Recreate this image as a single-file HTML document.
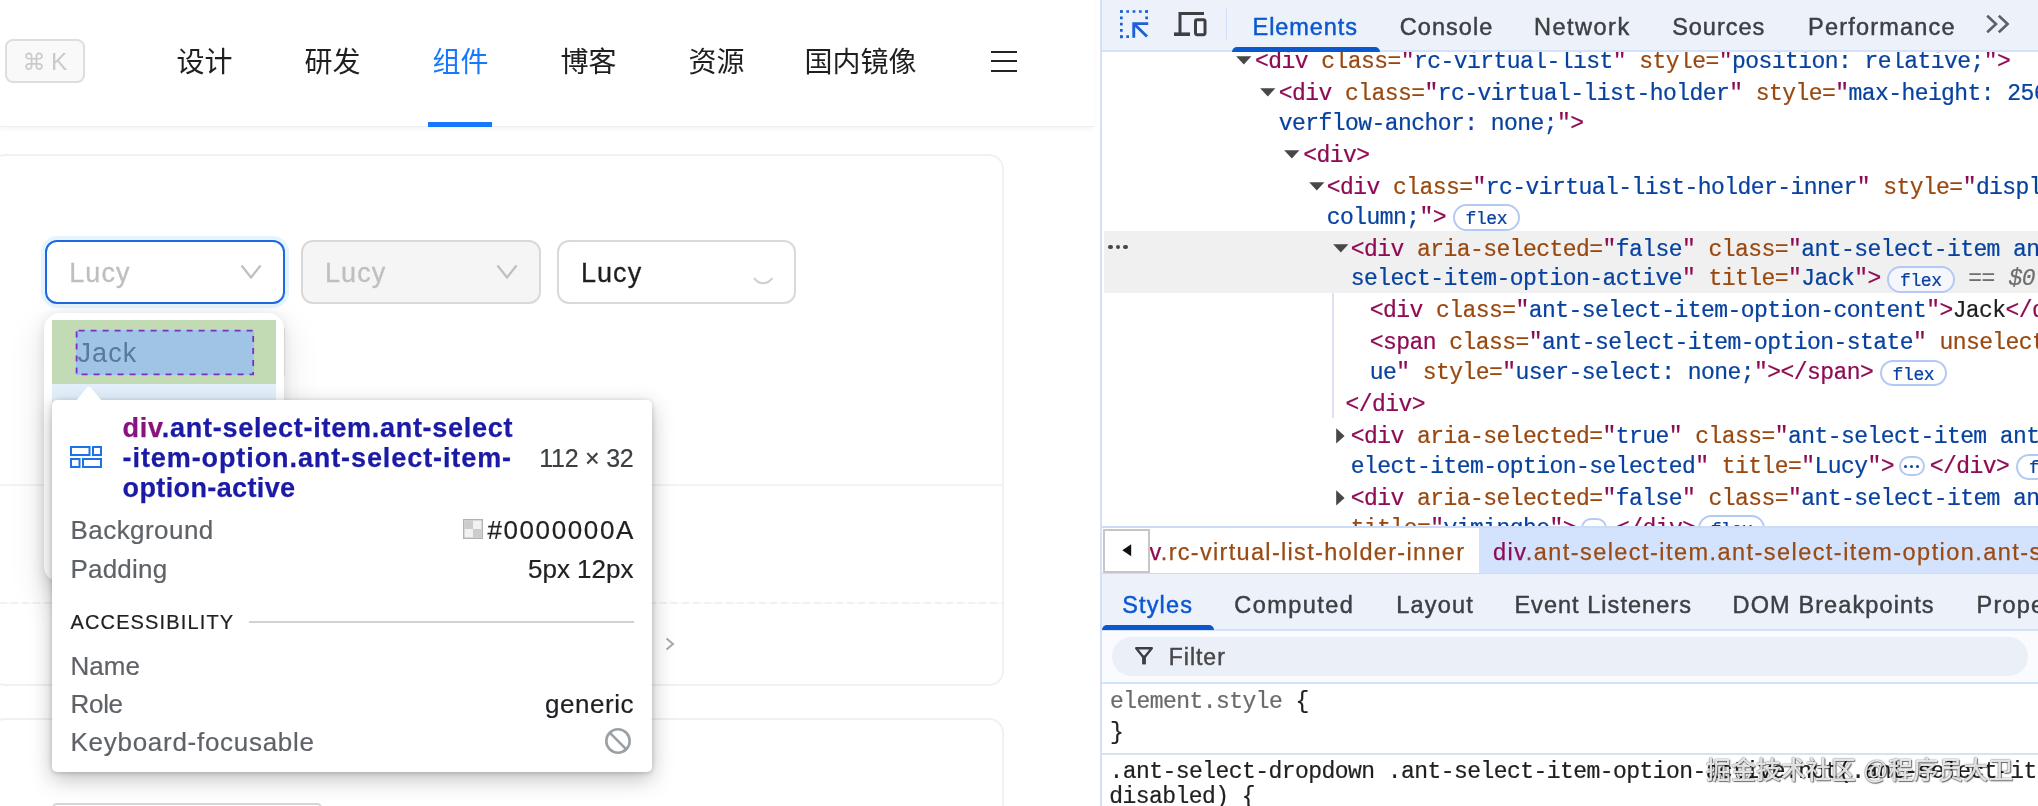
<!DOCTYPE html>
<html lang="zh-CN"><head><meta charset="utf-8"><title>Select – DevTools</title>
<style>
html,body{margin:0;padding:0;background:#fff;}
body{will-change:transform;width:2038px;height:806px;position:relative;overflow:hidden;font-family:'Liberation Sans', 'Noto Sans CJK SC', sans-serif;}
.t{position:absolute;white-space:pre;}
.m{-webkit-text-stroke:0.22px currentColor;}
.b{position:absolute;box-sizing:border-box;}
svg{position:absolute;overflow:visible;}
.clip{position:absolute;overflow:hidden;}
</style></head><body>
<div class="clip" style="left:0;top:0;width:1100px;height:806px;background:#fff;">
<div class="b" style="left:0px;top:0px;width:1094px;height:127px;background:#fff;border-bottom:1.5px solid #efefef;box-shadow:0 2px 6px rgba(0,0,0,.045);"></div>
<div class="b" style="left:5px;top:39px;width:79.7px;height:43.8px;background:#f9f9f9;border:2px solid #dedede;border-radius:8px;"></div>
<span class="t" style="left:22.4px;top:51px;font:400 23px/1 'Liberation Sans', 'Noto Sans CJK SC', sans-serif;color:#cacaca;font-family:'DejaVu Sans','Liberation Sans',sans-serif;">⌘</span>
<span class="t" style="left:51px;top:50px;font:400 24.5px/1 'Liberation Sans', 'Noto Sans CJK SC', sans-serif;color:#cacaca;">K</span>
<span class="t" style="left:176.4px;top:49px;font:400 28px/1 'Liberation Sans', 'Noto Sans CJK SC', sans-serif;color:#1f1f1f;">设计</span>
<span class="t" style="left:304.4px;top:49px;font:400 28px/1 'Liberation Sans', 'Noto Sans CJK SC', sans-serif;color:#1f1f1f;">研发</span>
<span class="t" style="left:432.4px;top:49px;font:400 28px/1 'Liberation Sans', 'Noto Sans CJK SC', sans-serif;color:#1677ff;">组件</span>
<span class="t" style="left:560.4px;top:49px;font:400 28px/1 'Liberation Sans', 'Noto Sans CJK SC', sans-serif;color:#1f1f1f;">博客</span>
<span class="t" style="left:688.4px;top:49px;font:400 28px/1 'Liberation Sans', 'Noto Sans CJK SC', sans-serif;color:#1f1f1f;">资源</span>
<span class="t" style="left:804.4px;top:49px;font:400 28px/1 'Liberation Sans', 'Noto Sans CJK SC', sans-serif;color:#1f1f1f;">国内镜像</span>
<div class="b" style="left:428px;top:122px;width:64px;height:4.5px;background:#1677ff;"></div>
<div class="b" style="left:991px;top:50.5px;width:26px;height:2.4px;background:#222;"></div>
<div class="b" style="left:991px;top:60px;width:26px;height:2.4px;background:#222;"></div>
<div class="b" style="left:991px;top:69.5px;width:26px;height:2.4px;background:#222;"></div>
<div class="b" style="left:-10px;top:153.8px;width:1014px;height:532.2px;border:2px solid #f1f1f1;border-radius:15px;background:#fff;"></div>
<div class="b" style="left:0px;top:484px;width:1003px;height:2px;background:#f3f3f3;"></div>
<div class="b" style="left:0px;top:602px;width:1003px;height:2px;background:repeating-linear-gradient(90deg,#f1f1f1 0 7px,#fbfbfb 7px 11px);"></div>
<svg style="left:664px;top:636px" width="12" height="16" viewBox="0 0 12 16"><path d="M2.5 2.5 L9 8 L2.5 13.5" fill="none" stroke="#a8a8a8" stroke-width="2"/></svg>
<div class="b" style="left:-10px;top:717.5px;width:1014px;height:200px;border:2px solid #f1f1f1;border-radius:15px;background:#fff;"></div>
<div class="b" style="left:52px;top:803.2px;width:270px;height:20px;border:2px solid #d6d6d6;border-bottom:0;border-radius:5px 5px 0 0;"></div>
<div class="b" style="left:45.4px;top:240px;width:239.4px;height:64px;background:#fff;border:2px solid #1c6ae0;border-radius:12px;box-shadow:0 0 0 4px rgba(5,145,255,.1);"></div>
<span class="t" style="left:69.2px;top:260px;font:400 27px/1 'Liberation Sans', 'Noto Sans CJK SC', sans-serif;color:#bfbfbf;letter-spacing:1.083px;-webkit-text-stroke:0.3px #bfbfbf;">Lucy</span>
<div class="b" style="left:301.2px;top:240px;width:239.4px;height:64px;background:#f5f5f5;border:2px solid #d9d9d9;border-radius:12px;"></div>
<span class="t" style="left:325.0px;top:260px;font:400 27px/1 'Liberation Sans', 'Noto Sans CJK SC', sans-serif;color:#bfbfbf;letter-spacing:1.083px;-webkit-text-stroke:0.3px #bfbfbf;">Lucy</span>
<div class="b" style="left:557.1px;top:240px;width:239.4px;height:64px;background:#fff;border:2px solid #d9d9d9;border-radius:12px;"></div>
<span class="t" style="left:580.9px;top:260px;font:400 27px/1 'Liberation Sans', 'Noto Sans CJK SC', sans-serif;color:#1f1f1f;letter-spacing:1.083px;-webkit-text-stroke:0.3px #1f1f1f;">Lucy</span>
<svg style="left:240px;top:264px" width="22" height="16" viewBox="0 0 22 16"><path d="M1.5 1.5 L11 13.5 L20.5 1.5" fill="none" stroke="#bfbfbf" stroke-width="2.2"/></svg>
<svg style="left:496px;top:264px" width="22" height="16" viewBox="0 0 22 16"><path d="M1.5 1.5 L11 13.5 L20.5 1.5" fill="none" stroke="#bfbfbf" stroke-width="2.2"/></svg>
<svg style="left:752px;top:276px" width="22" height="10" viewBox="0 0 22 10"><path d="M2.6 2.6 A 10.4 10.4 0 0 0 19.8 2.6" fill="none" stroke="#cfcfcf" stroke-width="2" stroke-linecap="round"/></svg>
<div class="b" style="left:44px;top:312.5px;width:240px;height:269px;background:#fff;border-radius:16px;box-shadow:0 12px 32px 8px rgba(0,0,0,.07),0 6px 16px rgba(0,0,0,.08),0 0 10px rgba(0,0,0,.05);"></div>
<div class="b" style="left:52px;top:320px;width:224px;height:64px;background:#c3dbb4;"></div>
<div class="b" style="left:76px;top:330px;width:178px;height:45px;background:#a0c4e6;"></div>
<span class="t" style="left:77.6px;top:340px;font:400 27px/1 'Liberation Sans', 'Noto Sans CJK SC', sans-serif;color:#587a9c;letter-spacing:1.023px;">Jack</span>
<svg style="left:74px;top:328px" width="184" height="50" viewBox="0 0 184 50"><rect x="2.6" y="2.6" width="176.6" height="43.8" fill="none" stroke="#7a2ec6" stroke-width="1.8" stroke-dasharray="6 6" stroke-dashoffset="-2"/></svg>
<div class="b" style="left:52px;top:384px;width:224px;height:64px;background:#e3f0fb;"></div>
<div class="b" style="left:283.5px;top:328px;width:1.5px;height:48px;background:#d4d4d4;"></div>
</div>
<svg style="left:76px;top:385px" width="26" height="16" viewBox="0 0 26 16"><path d="M0 16 L11.2 2.6 Q12.8 0.8 14.4 2.6 L26 16 Z" fill="#fff"/></svg>
<div class="b" style="left:52px;top:400px;width:600px;height:371.8px;background:#fff;border-radius:5px;box-shadow:0 7px 22px rgba(0,0,0,.25),0 1px 5px rgba(0,0,0,.2);"></div>
<svg style="left:76px;top:385px" width="26" height="18" viewBox="0 0 26 18"><path d="M0 18 L0 16 L11.2 2.6 Q12.8 0.8 14.4 2.6 L26 16 L26 18 Z" fill="#fff"/></svg>
<svg style="left:70px;top:446px" width="32" height="22" viewBox="0 0 32 22" fill="none" stroke="#1a73e8" stroke-width="2"><rect x="1" y="1" width="18.5" height="8"/><rect x="23" y="1" width="8" height="8"/><rect x="1" y="13" width="8.5" height="8"/><rect x="13" y="13" width="18" height="8"/></svg>
<span class="t" style="left:122.6px;top:415px;font:700 27px/1 'Liberation Sans', 'Noto Sans CJK SC', sans-serif;color:#1a1aa6;letter-spacing:0.737px;-webkit-text-stroke:0.25px #1a1aa6;"><span style="color:#881280;-webkit-text-stroke-color:#881280">div</span>.ant-select-item.ant-select</span>
<span class="t" style="left:122.6px;top:445px;font:700 27px/1 'Liberation Sans', 'Noto Sans CJK SC', sans-serif;color:#1a1aa6;letter-spacing:0.91px;-webkit-text-stroke:0.25px #1a1aa6;">-item-option.ant-select-item-</span>
<span class="t" style="left:122.6px;top:475px;font:700 27px/1 'Liberation Sans', 'Noto Sans CJK SC', sans-serif;color:#1a1aa6;letter-spacing:0.373px;-webkit-text-stroke:0.25px #1a1aa6;">option-active</span>
<span class="t" style="right:1404.5px;top:446px;font:400 25px/1 'Liberation Sans', 'Noto Sans CJK SC', sans-serif;color:#3c4043;letter-spacing:-0.223px;-webkit-text-stroke:0.2px #3c4043;">112 × 32</span>
<span class="t" style="left:70.5px;top:517px;font:400 26px/1 'Liberation Sans', 'Noto Sans CJK SC', sans-serif;color:#5f6368;letter-spacing:0.45px;-webkit-text-stroke:0.2px currentColor;">Background</span>
<span class="t" style="right:1403.0px;top:517px;font:400 26px/1 'Liberation Sans', 'Noto Sans CJK SC', sans-serif;color:#202124;letter-spacing:1.621px;-webkit-text-stroke:0.2px currentColor;">#0000000A</span>
<svg style="left:463px;top:519px" width="20" height="20" viewBox="0 0 20 20"><rect x="0.7" y="0.7" width="18.6" height="18.6" fill="#f1f1f1" stroke="#b2b2b2" stroke-width="1.4"/><rect x="1.4" y="1.4" width="8.6" height="8.6" fill="#cccccc"/><rect x="10" y="10" width="8.6" height="8.6" fill="#cccccc"/></svg>
<span class="t" style="left:70.5px;top:556px;font:400 26px/1 'Liberation Sans', 'Noto Sans CJK SC', sans-serif;color:#5f6368;letter-spacing:0.2px;-webkit-text-stroke:0.2px currentColor;">Padding</span>
<span class="t" style="right:1404.5px;top:556px;font:400 26px/1 'Liberation Sans', 'Noto Sans CJK SC', sans-serif;color:#202124;-webkit-text-stroke:0.2px currentColor;">5px 12px</span>
<span class="t" style="left:70.5px;top:612px;font:400 20px/1 'Liberation Sans', 'Noto Sans CJK SC', sans-serif;color:#202124;letter-spacing:1.138px;-webkit-text-stroke:0.2px currentColor;">ACCESSIBILITY</span>
<div class="b" style="left:249px;top:621.2px;width:385px;height:1.6px;background:#d2d2d2;"></div>
<span class="t" style="left:70.5px;top:653px;font:400 26px/1 'Liberation Sans', 'Noto Sans CJK SC', sans-serif;color:#5f6368;-webkit-text-stroke:0.2px currentColor;">Name</span>
<span class="t" style="left:70.5px;top:691px;font:400 26px/1 'Liberation Sans', 'Noto Sans CJK SC', sans-serif;color:#5f6368;letter-spacing:-0.3px;-webkit-text-stroke:0.2px currentColor;">Role</span>
<span class="t" style="right:1403.95px;top:691px;font:400 26px/1 'Liberation Sans', 'Noto Sans CJK SC', sans-serif;color:#202124;letter-spacing:0.55px;-webkit-text-stroke:0.2px currentColor;">generic</span>
<span class="t" style="left:70.5px;top:729px;font:400 26px/1 'Liberation Sans', 'Noto Sans CJK SC', sans-serif;color:#5f6368;letter-spacing:0.72px;-webkit-text-stroke:0.2px currentColor;">Keyboard-focusable</span>
<svg style="left:604px;top:727px" width="28" height="28" viewBox="0 0 28 28" fill="none" stroke="#9aa0a6" stroke-width="2.6"><circle cx="14" cy="14" r="11.7"/><path d="M5.7 5.7 L22.3 22.3"/></svg>
<div class="clip" style="left:1100px;top:0;width:938px;height:806px;background:#fff;">
<div style="position:absolute;left:-1100px;top:0;width:2038px;height:806px;">
<div class="b" style="left:1100px;top:0px;width:2.2px;height:806px;background:#d4e0f9;"></div>
<div class="b" style="left:1103.5px;top:231px;width:940px;height:62px;background:#f0f0f0;"></div>
<div class="b" style="left:1332.3px;top:293px;width:1.4px;height:125px;background:#dde2f3;"></div>
<span class="t m" style="left:1255.1px;top:51px;font:400 23px/1 'Liberation Mono', 'DejaVu Sans Mono', monospace;color:#1f1f1f;letter-spacing:-0.557px;"><span style="color:#8e0b53">&lt;div</span> <span style="color:#9a480f">class=</span><span style="color:#8e0b53">"</span><span style="color:#0842a0">rc-virtual-list</span><span style="color:#8e0b53">"</span> <span style="color:#9a480f">style=</span><span style="color:#8e0b53">"</span><span style="color:#0842a0">position: relative;</span><span style="color:#8e0b53">"</span><span style="color:#8e0b53">&gt;</span></span>
<svg style="left:1236.2px;top:56.0px" width="16" height="9" viewBox="0 0 16 9"><path d="M0.2 0.3 H15.4 L7.8 8.4 Z" fill="#474747"/></svg>
<span class="t m" style="left:1278.8px;top:83px;font:400 23px/1 'Liberation Mono', 'DejaVu Sans Mono', monospace;color:#1f1f1f;letter-spacing:-0.557px;"><span style="color:#8e0b53">&lt;div</span> <span style="color:#9a480f">class=</span><span style="color:#8e0b53">"</span><span style="color:#0842a0">rc-virtual-list-holder</span><span style="color:#8e0b53">"</span> <span style="color:#9a480f">style=</span><span style="color:#8e0b53">"</span><span style="color:#0842a0">max-height: 256px; overflow-y: auto; o</span></span>
<svg style="left:1260.4px;top:87.94999999999999px" width="16" height="9" viewBox="0 0 16 9"><path d="M0.2 0.3 H15.4 L7.8 8.4 Z" fill="#474747"/></svg>
<span class="t m" style="left:1278.8px;top:113px;font:400 23px/1 'Liberation Mono', 'DejaVu Sans Mono', monospace;color:#1f1f1f;letter-spacing:-0.557px;"><span style="color:#0842a0">verflow-anchor: none;</span><span style="color:#8e0b53">"&gt;</span></span>
<span class="t m" style="left:1303.3px;top:145px;font:400 23px/1 'Liberation Mono', 'DejaVu Sans Mono', monospace;color:#1f1f1f;letter-spacing:-0.557px;"><span style="color:#8e0b53">&lt;div&gt;</span></span>
<svg style="left:1284.2px;top:149.75px" width="16" height="9" viewBox="0 0 16 9"><path d="M0.2 0.3 H15.4 L7.8 8.4 Z" fill="#474747"/></svg>
<span class="t m" style="left:1326.8px;top:177px;font:400 23px/1 'Liberation Mono', 'DejaVu Sans Mono', monospace;color:#1f1f1f;letter-spacing:-0.557px;"><span style="color:#8e0b53">&lt;div</span> <span style="color:#9a480f">class=</span><span style="color:#8e0b53">"</span><span style="color:#0842a0">rc-virtual-list-holder-inner</span><span style="color:#8e0b53">"</span> <span style="color:#9a480f">style=</span><span style="color:#8e0b53">"</span><span style="color:#0842a0">display: flex; flex-direction:</span></span>
<svg style="left:1308.5px;top:181.70000000000002px" width="16" height="9" viewBox="0 0 16 9"><path d="M0.2 0.3 H15.4 L7.8 8.4 Z" fill="#474747"/></svg>
<span class="t m" style="left:1326.8px;top:207px;font:400 23px/1 'Liberation Mono', 'DejaVu Sans Mono', monospace;color:#1f1f1f;letter-spacing:-0.557px;"><span style="color:#0842a0">column;</span><span style="color:#8e0b53">"&gt;</span></span>
<div class="b" style="left:1452.5px;top:204.25px;width:67.5px;height:26.5px;border:2px solid #b4c9f3;border-radius:14px;background:#fff;"></div>
<span class="t m" style="left:1465.5px;top:210px;font:400 18px/1 'Liberation Mono', 'DejaVu Sans Mono', monospace;color:#0842a0;letter-spacing:-0.4px;">flex</span>
<span class="t m" style="left:1350.8px;top:239px;font:400 23px/1 'Liberation Mono', 'DejaVu Sans Mono', monospace;color:#1f1f1f;letter-spacing:-0.557px;"><span style="color:#8e0b53">&lt;div</span> <span style="color:#9a480f">aria-selected=</span><span style="color:#8e0b53">"</span><span style="color:#0842a0">false</span><span style="color:#8e0b53">"</span> <span style="color:#9a480f">class=</span><span style="color:#8e0b53">"</span><span style="color:#0842a0">ant-select-item ant-select-item-option ant-</span></span>
<svg style="left:1332.6px;top:243.50000000000003px" width="16" height="9" viewBox="0 0 16 9"><path d="M0.2 0.3 H15.4 L7.8 8.4 Z" fill="#474747"/></svg>
<div class="b" style="left:1108.4px;top:244.90000000000003px;width:4.6px;height:4.6px;background:#474747;border-radius:50%;"></div>
<div class="b" style="left:1115.8000000000002px;top:244.90000000000003px;width:4.6px;height:4.6px;background:#474747;border-radius:50%;"></div>
<div class="b" style="left:1123.2px;top:244.90000000000003px;width:4.6px;height:4.6px;background:#474747;border-radius:50%;"></div>
<span class="t m" style="left:1350.8px;top:268px;font:400 23px/1 'Liberation Mono', 'DejaVu Sans Mono', monospace;color:#1f1f1f;letter-spacing:-0.557px;"><span style="color:#0842a0">select-item-option-active</span><span style="color:#8e0b53">"</span> <span style="color:#9a480f">title=</span><span style="color:#8e0b53">"</span><span style="color:#0842a0">Jack</span><span style="color:#8e0b53">"</span><span style="color:#8e0b53">&gt;</span></span>
<div class="b" style="left:1887px;top:266.05px;width:67.5px;height:26.5px;border:2px solid #b4c9f3;border-radius:14px;background:#f5f7fc;"></div>
<span class="t m" style="left:1900px;top:272px;font:400 18px/1 'Liberation Mono', 'DejaVu Sans Mono', monospace;color:#0842a0;letter-spacing:-0.4px;">flex</span>
<span class="t m" style="left:1968.2px;top:268px;font:400 23px/1 'Liberation Mono', 'DejaVu Sans Mono', monospace;color:#6f6f6f;letter-spacing:-0.557px;">==</span>
<span class="t m" style="left:2008.6px;top:268px;font:400 23px/1 'Liberation Mono', 'DejaVu Sans Mono', monospace;color:#6f6f6f;letter-spacing:-0.557px;font-style:italic;">$0</span>
<span class="t m" style="left:1369.8px;top:300px;font:400 23px/1 'Liberation Mono', 'DejaVu Sans Mono', monospace;color:#1f1f1f;letter-spacing:-0.557px;"><span style="color:#8e0b53">&lt;div</span> <span style="color:#9a480f">class=</span><span style="color:#8e0b53">"</span><span style="color:#0842a0">ant-select-item-option-content</span><span style="color:#8e0b53">"</span><span style="color:#8e0b53">&gt;</span>Jack<span style="color:#8e0b53">&lt;/div&gt;</span></span>
<span class="t m" style="left:1369.8px;top:332px;font:400 23px/1 'Liberation Mono', 'DejaVu Sans Mono', monospace;color:#1f1f1f;letter-spacing:-0.557px;"><span style="color:#8e0b53">&lt;span</span> <span style="color:#9a480f">class=</span><span style="color:#8e0b53">"</span><span style="color:#0842a0">ant-select-item-option-state</span><span style="color:#8e0b53">"</span> <span style="color:#9a480f">unselectable=</span><span style="color:#8e0b53">"</span><span style="color:#0842a0">on</span><span style="color:#8e0b53">"</span> <span style="color:#9a480f">aria-hidden=</span><span style="color:#8e0b53">"</span><span style="color:#0842a0">tr</span></span>
<span class="t m" style="left:1369.8px;top:362px;font:400 23px/1 'Liberation Mono', 'DejaVu Sans Mono', monospace;color:#1f1f1f;letter-spacing:-0.557px;"><span style="color:#0842a0">ue</span><span style="color:#8e0b53">"</span> <span style="color:#9a480f">style=</span><span style="color:#8e0b53">"</span><span style="color:#0842a0">user-select: none;</span><span style="color:#8e0b53">"</span><span style="color:#8e0b53">&gt;&lt;/span&gt;</span></span>
<div class="b" style="left:1879.6px;top:359.8px;width:67.5px;height:26.5px;border:2px solid #b4c9f3;border-radius:14px;background:#fff;"></div>
<span class="t m" style="left:1892.6px;top:366px;font:400 18px/1 'Liberation Mono', 'DejaVu Sans Mono', monospace;color:#0842a0;letter-spacing:-0.4px;">flex</span>
<span class="t m" style="left:1345.6px;top:394px;font:400 23px/1 'Liberation Mono', 'DejaVu Sans Mono', monospace;color:#1f1f1f;letter-spacing:-0.557px;"><span style="color:#8e0b53">&lt;/div&gt;</span></span>
<span class="t m" style="left:1350.8px;top:426px;font:400 23px/1 'Liberation Mono', 'DejaVu Sans Mono', monospace;color:#1f1f1f;letter-spacing:-0.557px;"><span style="color:#8e0b53">&lt;div</span> <span style="color:#9a480f">aria-selected=</span><span style="color:#8e0b53">"</span><span style="color:#0842a0">true</span><span style="color:#8e0b53">"</span> <span style="color:#9a480f">class=</span><span style="color:#8e0b53">"</span><span style="color:#0842a0">ant-select-item ant-select-item-option ant-s</span></span>
<svg style="left:1335.7px;top:428.00000000000006px" width="9" height="16" viewBox="0 0 9 16"><path d="M0.2 0.2 V15.6 L8.6 7.9 Z" fill="#474747"/></svg>
<span class="t m" style="left:1350.8px;top:456px;font:400 23px/1 'Liberation Mono', 'DejaVu Sans Mono', monospace;color:#1f1f1f;letter-spacing:-0.557px;"><span style="color:#0842a0">elect-item-option-selected</span><span style="color:#8e0b53">"</span> <span style="color:#9a480f">title=</span><span style="color:#8e0b53">"</span><span style="color:#0842a0">Lucy</span><span style="color:#8e0b53">"</span><span style="color:#8e0b53">&gt;</span></span>
<div class="b" style="left:1898.7px;top:456.15000000000003px;width:26.3px;height:19.8px;border:2px solid #b4c9f3;border-radius:14px;background:#fff;"></div>
<div class="b" style="left:1904.3px;top:464.65000000000003px;width:3.2px;height:3.2px;background:#0842a0;border-radius:50%;"></div>
<div class="b" style="left:1909.8999999999999px;top:464.65000000000003px;width:3.2px;height:3.2px;background:#0842a0;border-radius:50%;"></div>
<div class="b" style="left:1915.5px;top:464.65000000000003px;width:3.2px;height:3.2px;background:#0842a0;border-radius:50%;"></div>
<span class="t m" style="left:1929.7px;top:456px;font:400 23px/1 'Liberation Mono', 'DejaVu Sans Mono', monospace;color:#1f1f1f;letter-spacing:-0.557px;"><span style="color:#8e0b53">&lt;/div&gt;</span></span>
<div class="b" style="left:2016px;top:453.55px;width:67.5px;height:26.5px;border:2px solid #b4c9f3;border-radius:14px;background:#fff;"></div>
<span class="t m" style="left:2029px;top:459px;font:400 18px/1 'Liberation Mono', 'DejaVu Sans Mono', monospace;color:#0842a0;letter-spacing:-0.4px;">flex</span>
<span class="t m" style="left:1350.8px;top:488px;font:400 23px/1 'Liberation Mono', 'DejaVu Sans Mono', monospace;color:#1f1f1f;letter-spacing:-0.557px;"><span style="color:#8e0b53">&lt;div</span> <span style="color:#9a480f">aria-selected=</span><span style="color:#8e0b53">"</span><span style="color:#0842a0">false</span><span style="color:#8e0b53">"</span> <span style="color:#9a480f">class=</span><span style="color:#8e0b53">"</span><span style="color:#0842a0">ant-select-item ant-select-item-option</span><span style="color:#8e0b53">"</span></span>
<svg style="left:1335.7px;top:489.8px" width="9" height="16" viewBox="0 0 9 16"><path d="M0.2 0.2 V15.6 L8.6 7.9 Z" fill="#474747"/></svg>
<span class="t m" style="left:1350.8px;top:518px;font:400 23px/1 'Liberation Mono', 'DejaVu Sans Mono', monospace;color:#1f1f1f;letter-spacing:-0.557px;"><span style="color:#9a480f">title=</span><span style="color:#8e0b53">"</span><span style="color:#0842a0">yiminghe</span><span style="color:#8e0b53">"</span><span style="color:#8e0b53">&gt;</span></span>
<div class="b" style="left:1581px;top:517.9499999999999px;width:26.3px;height:19.8px;border:2px solid #b4c9f3;border-radius:14px;background:#fff;"></div>
<div class="b" style="left:1586.6px;top:526.4499999999999px;width:3.2px;height:3.2px;background:#0842a0;border-radius:50%;"></div>
<div class="b" style="left:1592.1999999999998px;top:526.4499999999999px;width:3.2px;height:3.2px;background:#0842a0;border-radius:50%;"></div>
<div class="b" style="left:1597.8px;top:526.4499999999999px;width:3.2px;height:3.2px;background:#0842a0;border-radius:50%;"></div>
<span class="t m" style="left:1616px;top:518px;font:400 23px/1 'Liberation Mono', 'DejaVu Sans Mono', monospace;color:#1f1f1f;letter-spacing:-0.557px;"><span style="color:#8e0b53">&lt;/div&gt;</span></span>
<div class="b" style="left:1697.7px;top:515.35px;width:67.5px;height:26.5px;border:2px solid #b4c9f3;border-radius:14px;background:#fff;"></div>
<span class="t m" style="left:1710.7px;top:521px;font:400 18px/1 'Liberation Mono', 'DejaVu Sans Mono', monospace;color:#0842a0;letter-spacing:-0.4px;">flex</span>
<div class="b" style="left:1102px;top:0px;width:940px;height:50px;background:#ecf1fa;"></div>
<div class="b" style="left:1102px;top:50px;width:940px;height:2px;background:#d3e1fa;"></div>
<svg style="left:1119px;top:9px" width="31" height="30" viewBox="0 0 31 30"><g stroke="#1a62d6" stroke-width="2.7" stroke-dasharray="2.7 3.62" fill="none"><path d="M1 2.5 H30"/><path d="M2.35 1.15 V30"/><path d="M27.65 1.15 V11"/><path d="M1 27.6 H12"/></g><path d="M13.3 13.2 H29.2 V16 H18.2 L29 26.6 L27 28.6 L16.2 18 V28.8 H13.3 Z" fill="#1a62d6"/></svg>
<svg style="left:1173px;top:11px" width="34" height="26" viewBox="0 0 34 26" fill="none" stroke="#3c4043"><path d="M31 2.5 H7 V22.5" stroke-width="3"/><path d="M1 23.2 H17" stroke-width="3.6"/><rect x="22.5" y="8.7" width="9.5" height="15" rx="1.6" stroke-width="3" fill="#f3f5fa"/></svg>
<div class="b" style="left:1225.6px;top:8px;width:1.5px;height:32px;background:#d0def8;"></div>
<span class="t" style="left:1252.6px;top:16px;font:400 23.5px/1 'Liberation Sans', 'Noto Sans CJK SC', sans-serif;color:#0b57d0;letter-spacing:0.919px;-webkit-text-stroke:0.45px #0b57d0;">Elements</span>
<span class="t" style="left:1399.8px;top:16px;font:400 23.5px/1 'Liberation Sans', 'Noto Sans CJK SC', sans-serif;color:#3c4043;letter-spacing:1.045px;-webkit-text-stroke:0.45px #3c4043;">Console</span>
<span class="t" style="left:1534px;top:16px;font:400 23.5px/1 'Liberation Sans', 'Noto Sans CJK SC', sans-serif;color:#3c4043;letter-spacing:1.502px;-webkit-text-stroke:0.45px #3c4043;">Network</span>
<span class="t" style="left:1672.2px;top:16px;font:400 23.5px/1 'Liberation Sans', 'Noto Sans CJK SC', sans-serif;color:#3c4043;letter-spacing:0.963px;-webkit-text-stroke:0.45px #3c4043;">Sources</span>
<span class="t" style="left:1808px;top:16px;font:400 23.5px/1 'Liberation Sans', 'Noto Sans CJK SC', sans-serif;color:#3c4043;letter-spacing:1.207px;-webkit-text-stroke:0.45px #3c4043;">Performance</span>
<svg style="left:1986px;top:14px" width="24" height="20" viewBox="0 0 24 20" fill="none" stroke="#5c6166" stroke-width="2.6"><path d="M1.2 1.8 L10 10 L1.2 18.2"/><path d="M12.8 1.8 L21.6 10 L12.8 18.2"/></svg>
<div class="b" style="left:1232px;top:47px;width:148px;height:5px;background:#0b57d0;border-radius:5px 5px 0 0;"></div>
<div class="b" style="left:1102px;top:526px;width:940px;height:48px;background:#fff;"></div>
<div class="b" style="left:1102px;top:526px;width:940px;height:2px;background:#cddcf6;"></div>
<div class="b" style="left:1479px;top:527.6px;width:570px;height:46.4px;background:#d3e3fd;"></div>
<div class="clip" style="left:1150px;top:528px;width:329px;height:45px;">
<span class="t" style="left:-0.5px;top:13px;font:400 23.5px/1 'Liberation Sans', 'Noto Sans CJK SC', sans-serif;color:#9a4a12;letter-spacing:1.313px;-webkit-text-stroke:0.25px #9a4a12;"><span style="color:#8e0b53;-webkit-text-stroke-color:#8e0b53">v</span>.rc-virtual-list-holder-inner</span>
</div>
<span class="t" style="left:1493px;top:541px;font:400 23.5px/1 'Liberation Sans', 'Noto Sans CJK SC', sans-serif;color:#9a4a12;letter-spacing:1.45px;-webkit-text-stroke:0.25px #9a4a12;"><span style="color:#8e0b53;-webkit-text-stroke-color:#8e0b53">div</span>.ant-select-item.ant-select-item-option.ant-select-item-option-active</span>
<div class="b" style="left:1102px;top:573.4px;width:940px;height:1.8px;background:#cddcf6;"></div>
<div class="b" style="left:1103px;top:529px;width:46.5px;height:43.5px;background:#fff;border:2px solid #c6c6c6;"></div>
<svg style="left:1121.5px;top:544px" width="10" height="13" viewBox="0 0 10 13"><path d="M9.2 0.3 V12.3 L0.3 6.3 Z" fill="#111"/></svg>
<div class="b" style="left:1102px;top:574px;width:940px;height:55.5px;background:#ecf1fa;"></div>
<div class="b" style="left:1102px;top:629.2px;width:940px;height:1.8px;background:#d3e1fa;"></div>
<span class="t" style="left:1122.2px;top:594px;font:400 23.5px/1 'Liberation Sans', 'Noto Sans CJK SC', sans-serif;color:#0b57d0;letter-spacing:1.14px;-webkit-text-stroke:0.45px #0b57d0;">Styles</span>
<span class="t" style="left:1234.3px;top:594px;font:400 23.5px/1 'Liberation Sans', 'Noto Sans CJK SC', sans-serif;color:#3c4043;letter-spacing:1.437px;-webkit-text-stroke:0.45px #3c4043;">Computed</span>
<span class="t" style="left:1396.2px;top:594px;font:400 23.5px/1 'Liberation Sans', 'Noto Sans CJK SC', sans-serif;color:#3c4043;letter-spacing:1.228px;-webkit-text-stroke:0.45px #3c4043;">Layout</span>
<span class="t" style="left:1514.4px;top:594px;font:400 23.5px/1 'Liberation Sans', 'Noto Sans CJK SC', sans-serif;color:#3c4043;letter-spacing:1.037px;-webkit-text-stroke:0.45px #3c4043;">Event Listeners</span>
<span class="t" style="left:1732.6px;top:594px;font:400 23.5px/1 'Liberation Sans', 'Noto Sans CJK SC', sans-serif;color:#3c4043;letter-spacing:1.111px;-webkit-text-stroke:0.45px #3c4043;">DOM Breakpoints</span>
<span class="t" style="left:1976.6px;top:594px;font:400 23.5px/1 'Liberation Sans', 'Noto Sans CJK SC', sans-serif;color:#3c4043;letter-spacing:1.21px;-webkit-text-stroke:0.45px #3c4043;">Properties</span>
<div class="b" style="left:1102px;top:625px;width:112px;height:4.6px;background:#0b57d0;border-radius:5px 5px 0 0;"></div>
<div class="b" style="left:1102px;top:631px;width:940px;height:51px;background:#fafbfe;"></div>
<div class="b" style="left:1112px;top:636.8px;width:916px;height:39.4px;background:#ebeff8;border-radius:20px;"></div>
<svg style="left:1134px;top:646px" width="20" height="20" viewBox="0 0 20 20"><path d="M2.2 2.3 H17.8 L10 12 Z" fill="none" stroke="#3c4043" stroke-width="2.4" stroke-linejoin="round"/><rect x="8.1" y="9.5" width="3.8" height="8.9" fill="#3c4043"/></svg>
<span class="t" style="left:1168.8px;top:646px;font:400 23px/1 'Liberation Sans', 'Noto Sans CJK SC', sans-serif;color:#474747;letter-spacing:0.976px;-webkit-text-stroke:0.45px #474747;">Filter</span>
<div class="b" style="left:1102px;top:682px;width:940px;height:1.8px;background:#d3e1fa;"></div>
<span class="t m" style="left:1110px;top:691px;font:400 23px/1 'Liberation Mono', 'DejaVu Sans Mono', monospace;color:#1f1f1f;letter-spacing:-0.557px;"><span style="color:#6b6b6b">element.style</span> {</span>
<span class="t m" style="left:1110px;top:722px;font:400 23px/1 'Liberation Mono', 'DejaVu Sans Mono', monospace;color:#1f1f1f;">}</span>
<div class="b" style="left:1102px;top:753.2px;width:940px;height:1.6px;background:#d9e1f2;"></div>
<span class="t m" style="left:1109.6px;top:761px;font:400 23px/1 'Liberation Mono', 'DejaVu Sans Mono', monospace;color:#1f1f1f;letter-spacing:-0.557px;">.ant-select-dropdown .ant-select-item-option-active:not(.ant-select-item-option-</span>
<span class="t m" style="left:1109.2px;top:786px;font:400 23px/1 'Liberation Mono', 'DejaVu Sans Mono', monospace;color:#1f1f1f;letter-spacing:-0.557px;">disabled) {</span>
<span class="t" style="left:1706px;top:758px;font:500 25px/1 'Liberation Sans', 'Noto Sans CJK SC', sans-serif;color:rgba(255,255,255,.85);font-family:'Liberation Sans','Noto Sans CJK SC',sans-serif;text-shadow:1px 1px 1px rgba(0,0,0,.5),0 0 1.5px rgba(0,0,0,.55),-0.5px -0.5px 1px rgba(0,0,0,.25);">掘金技术社区 @程序员大卫</span>
</div></div>
</body></html>
